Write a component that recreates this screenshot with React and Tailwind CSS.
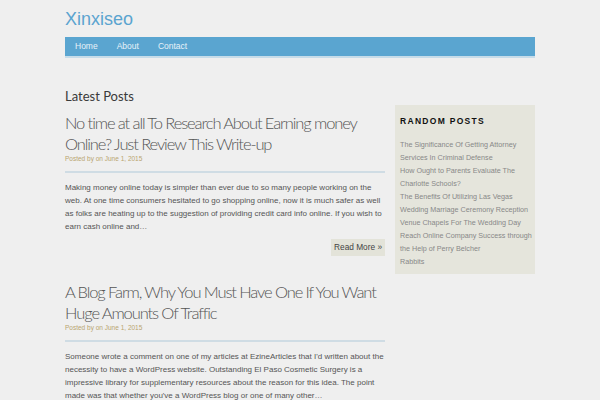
import React from 'react';

const posts = [
  {
    title: 'No time at all To Research About Earning money Online? Just Review This Write-up',
    excerpt:
      'Making money online today is simpler than ever due to so many people working on the web. At one time consumers hesitated to go shopping online, now it is much safer as well as folks are heating up to the suggestion of providing credit card info online. If you wish to earn cash online and…',
  },
  {
    title: 'A Blog Farm, Why You Must Have One If You Want Huge Amounts Of Traffic',
    excerpt:
      "Someone wrote a comment on one of my articles at EzineArticles that I'd written about the necessity to have a WordPress website. Outstanding El Paso Cosmetic Surgery is a impressive library for supplementary resources about the reason for this idea. The point made was that whether you've a WordPress blog or one of many other…",
  },
];

const randomPosts = [
  'The Significance Of Getting Attorney Services In Criminal Defense',
  'How Ought to Parents Evaluate The Charlotte Schools?',
  'The Benefits Of Utilizing Las Vegas Wedding Marriage Ceremony Reception Venue Chapels For The Wedding Day',
  'Reach Online Company Success through the Help of Perry Belcher',
  'Rabbits',
];

const App = () => {
  return (
    <div className="min-h-[400px] bg-[#efefef] font-['Liberation_Sans',Arial,sans-serif]">
      <div className="w-[470px] mx-auto pt-[9px]">
        {/* header */}
        <div className="text-[18px] leading-[20px] text-[#5ba4cf] h-[28px]">Xinxiseo</div>
        <div className="h-[21px] bg-[#5aa5d0] border-b-2 border-[#c6dce9] flex items-center pl-[10px] text-[8.5px] text-[#e8f2f8]">
          <a className="mr-[19px]">Home</a>
          <a className="mr-[19px]">About</a>
          <a>Contact</a>
        </div>

        <div className="flex justify-between mt-[30px]">
          {/* main */}
          <div className="w-[320px]">
            <h2 className="font-['Lato',sans-serif] text-[13px] leading-[16px] text-[#3a3a3a]">Latest Posts</h2>

            {posts.map((post, i) => (
              <div key={i} className={i === 0 ? 'mt-[9px]' : 'mt-[26px]'}>
                <h1 className="font-['Lato',sans-serif] font-light text-[16.5px] leading-[21px] tracking-[-1.1px] text-[#555]">
                  {post.title}
                </h1>
                <div className="text-[6.5px] leading-[10px] text-[#b9a56f] mt-[-1px]">Posted by on June 1, 2015</div>
                <div className="h-[2px] bg-[#cfdce4] mt-[7px]"></div>
                <p className="text-[8px] leading-[13px] text-[#555] mt-[8px]">{post.excerpt}</p>
                {i === 0 && (
                  <div className="flex justify-end mt-[6px]">
                    <a className="bg-[#e3e3d9] text-[#444] text-[8.3px] px-[3px] h-[17px] flex items-center">
                      Read More »
                    </a>
                  </div>
                )}
              </div>
            ))}
          </div>

          {/* sidebar */}
          <div className="w-[140px] self-start mt-[17px] bg-[#e5e5dc] pl-[5px] pr-0 pt-[11px] pb-[6px]">
            <h3 className="text-[8.5px] leading-[10px] font-bold tracking-[1.3px] text-[#111] mb-[12px]">RANDOM POSTS</h3>
            <ul className="text-[7.2px] leading-[13px] text-[#888]">
              {randomPosts.map((p, i) => (
                <li key={i}>{p}</li>
              ))}
            </ul>
          </div>
        </div>
      </div>
    </div>
  );
};

export default App;
